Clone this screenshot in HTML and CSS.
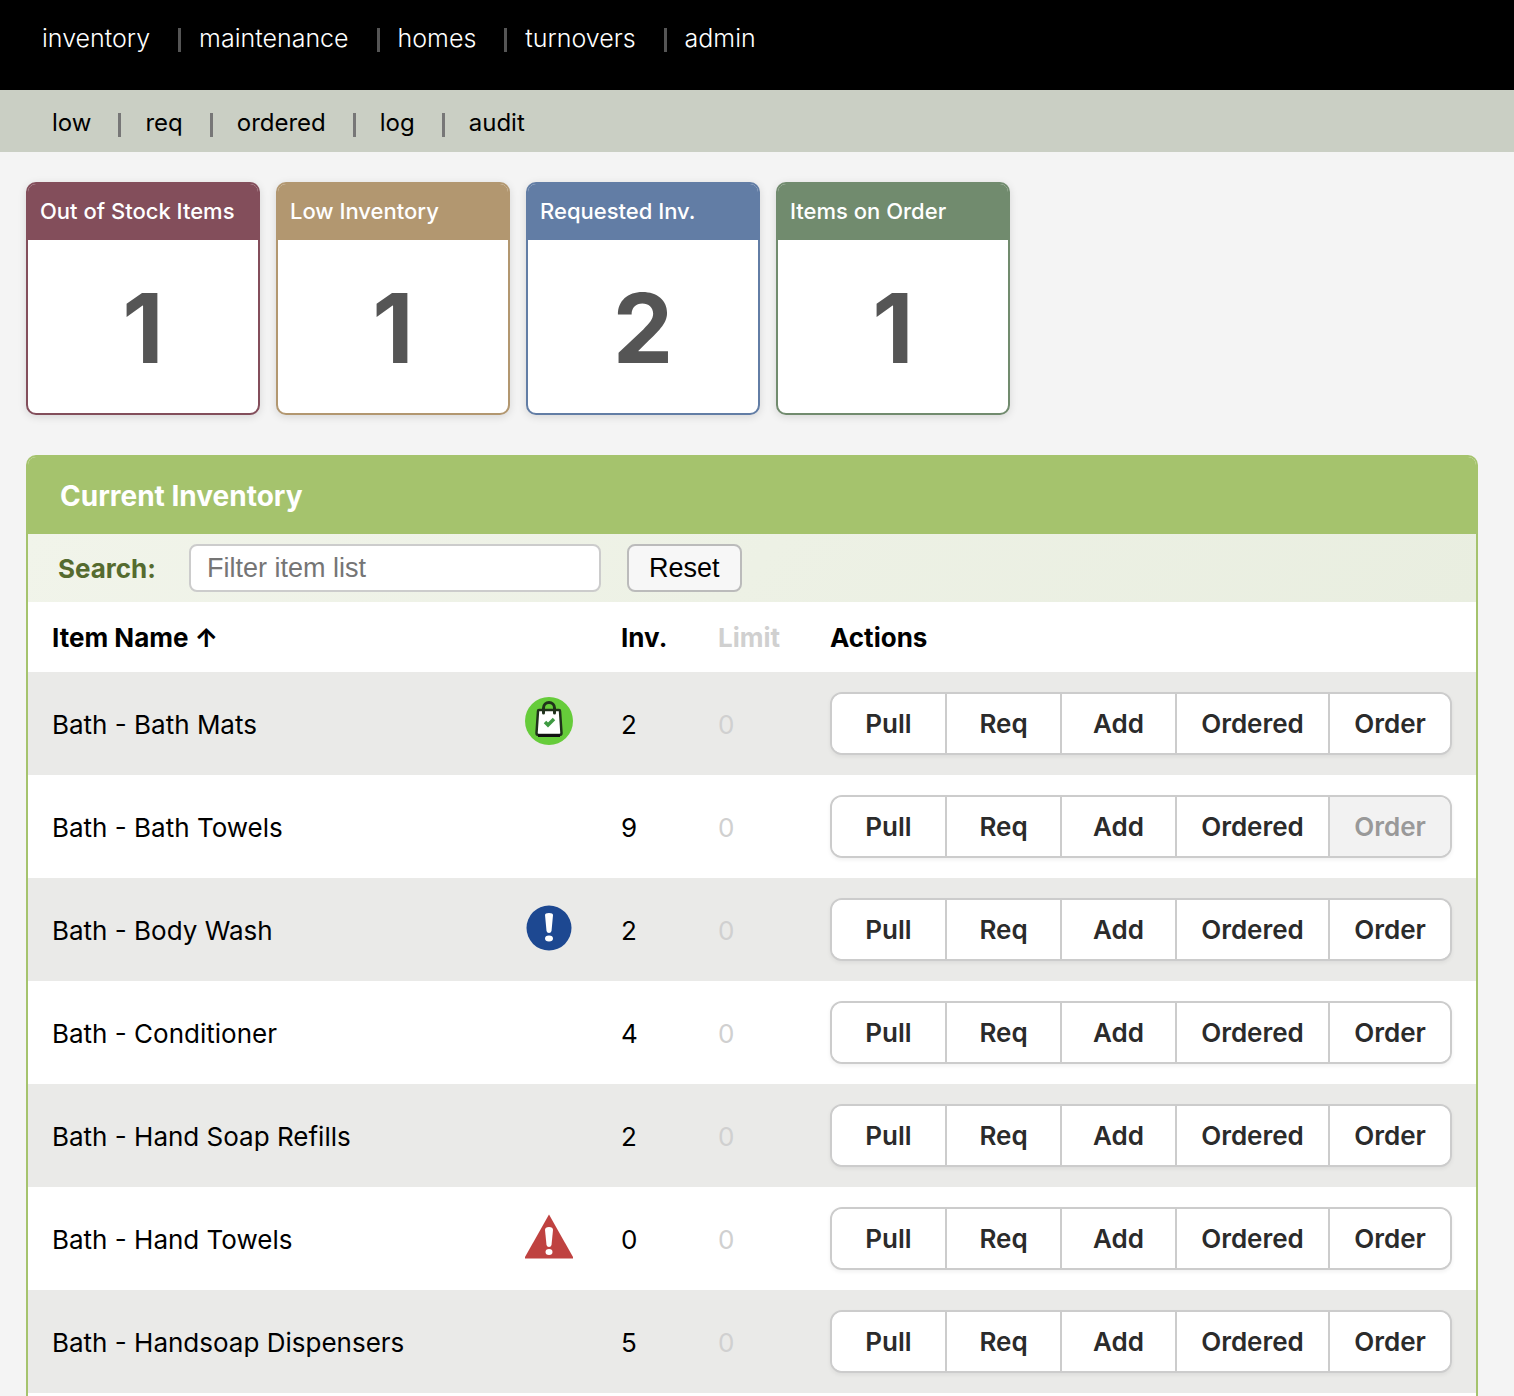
FILE: index.html
```html
<!DOCTYPE html>
<html lang="en">
<head>
    <meta charset="UTF-8">
    <meta name="viewport" content="width=device-width, initial-scale=1.0">
    <title>Inventory</title>
    <link rel="stylesheet" href="styles.css">
</head>
<body>
    <nav class="main-nav" aria-label="Main">
        <a href="#inventory">inventory</a>
        <a href="#maintenance">maintenance</a>
        <a href="#homes">homes</a>
        <a href="#turnovers">turnovers</a>
        <a href="#admin">admin</a>
    </nav>
    <nav class="sub-nav" aria-label="Inventory">
        <a href="#low">low</a>
        <a href="#req">req</a>
        <a href="#ordered">ordered</a>
        <a href="#log">log</a>
        <a href="#audit">audit</a>
    </nav>

    <main>
        <!-- Summary cards -->
        <section class="cards">
            <div class="card out">
                <h2>Out of Stock Items</h2>
                <p>1</p>
            </div>
            <div class="card low">
                <h2>Low Inventory</h2>
                <p>1</p>
            </div>
            <div class="card requested">
                <h2>Requested Inv.</h2>
                <p>2</p>
            </div>
            <div class="card on-order">
                <h2>Items on Order</h2>
                <p>1</p>
            </div>
        </section>

        <!-- Inventory list -->
        <section class="panel">
            <h1>Current Inventory</h1>
            <form class="search">
                <label for="filter">Search:</label>
                <input type="text" id="filter" placeholder="Filter item list">
                <button type="reset">Reset</button>
            </form>
            <table>
                <thead>
                    <tr>
                        <th class="name"><button type="button" class="sort">Item Name ↑</button></th>
                        <th class="status"></th>
                        <th class="inv">Inv.</th>
                        <th class="limit">Limit</th>
                        <th class="actions">Actions</th>
                    </tr>
                </thead>
                <tbody>
                    <tr>
                        <td>Bath - Bath Mats</td>
                        <td class="status">
                            <svg viewBox="0 0 48 48" role="img" aria-label="Ordered">
                                <circle cx="24" cy="24" r="24" fill="#66cc3a"/>
                                <path d="M18.500 15V11a5.500 5.500 0 0 1 11 0v4" fill="none" stroke="#20321b" stroke-width="3"/>
                                <path d="M14 13h20q1 0 1 1l1.500 22q0 2-2 2H13.500q-2 0-2-2l1.500-22q0-1 1-1z" fill="#fff" stroke="#20321b" stroke-width="2.500"/>
                                <path d="M13 38.500h22" stroke="#111" stroke-width="3"/>
                                <path d="M18.500 13v3M29.500 13v3" stroke="#20321b" stroke-width="3" stroke-linecap="round"/>
                                <path d="M20 25l3 3 6-6" fill="none" stroke="#3e9a42" stroke-width="3.500"/>
                            </svg>
                        </td>
                        <td>2</td>
                        <td class="limit">0</td>
                        <td>
                            <div class="btn-group">
                                <button type="button">Pull</button>
                                <button type="button">Req</button>
                                <button type="button">Add</button>
                                <button type="button" class="ordered">Ordered</button>
                                <button type="button" class="order">Order</button>
                            </div>
                        </td>
                    </tr>
                    <tr>
                        <td>Bath - Bath Towels</td>
                        <td class="status"></td>
                        <td>9</td>
                        <td class="limit">0</td>
                        <td>
                            <div class="btn-group">
                                <button type="button">Pull</button>
                                <button type="button">Req</button>
                                <button type="button">Add</button>
                                <button type="button" class="ordered">Ordered</button>
                                <button type="button" class="order" disabled>Order</button>
                            </div>
                        </td>
                    </tr>
                    <tr>
                        <td>Bath - Body Wash</td>
                        <td class="status">
                            <svg viewBox="0 0 48 48" role="img" aria-label="Requested">
                                <circle cx="24" cy="25" r="22.500" fill="#1d4891"/>
                                <path d="M20 12q0-2 4-2t4 2l-1.500 16q-.5 2-2.500 2t-2.500-2z" fill="#fff"/>
                                <ellipse cx="24" cy="35.500" rx="4" ry="3" fill="#fff"/>
                            </svg>
                        </td>
                        <td>2</td>
                        <td class="limit">0</td>
                        <td>
                            <div class="btn-group">
                                <button type="button">Pull</button>
                                <button type="button">Req</button>
                                <button type="button">Add</button>
                                <button type="button" class="ordered">Ordered</button>
                                <button type="button" class="order">Order</button>
                            </div>
                        </td>
                    </tr>
                    <tr>
                        <td>Bath - Conditioner</td>
                        <td class="status"></td>
                        <td>4</td>
                        <td class="limit">0</td>
                        <td>
                            <div class="btn-group">
                                <button type="button">Pull</button>
                                <button type="button">Req</button>
                                <button type="button">Add</button>
                                <button type="button" class="ordered">Ordered</button>
                                <button type="button" class="order">Order</button>
                            </div>
                        </td>
                    </tr>
                    <tr>
                        <td>Bath - Hand Soap Refills</td>
                        <td class="status"></td>
                        <td>2</td>
                        <td class="limit">0</td>
                        <td>
                            <div class="btn-group">
                                <button type="button">Pull</button>
                                <button type="button">Req</button>
                                <button type="button">Add</button>
                                <button type="button" class="ordered">Ordered</button>
                                <button type="button" class="order">Order</button>
                            </div>
                        </td>
                    </tr>
                    <tr>
                        <td>Bath - Hand Towels</td>
                        <td class="status">
                            <svg viewBox="0 0 48 48" role="img" aria-label="Out of stock">
                                <path d="M24 2.500L48 45v1.500H0V45z" fill="#bf4240"/>
                                <path d="M20 18q0-3 4-3t4 3l-1.500 15q-.5 2-2.500 2t-2.500-2z" fill="#fff"/>
                                <ellipse cx="24" cy="40" rx="3.500" ry="3" fill="#fff"/>
                            </svg>
                        </td>
                        <td>0</td>
                        <td class="limit">0</td>
                        <td>
                            <div class="btn-group">
                                <button type="button">Pull</button>
                                <button type="button">Req</button>
                                <button type="button">Add</button>
                                <button type="button" class="ordered">Ordered</button>
                                <button type="button" class="order">Order</button>
                            </div>
                        </td>
                    </tr>
                    <tr>
                        <td>Bath - Handsoap Dispensers</td>
                        <td class="status"></td>
                        <td>5</td>
                        <td class="limit">0</td>
                        <td>
                            <div class="btn-group">
                                <button type="button">Pull</button>
                                <button type="button">Req</button>
                                <button type="button">Add</button>
                                <button type="button" class="ordered">Ordered</button>
                                <button type="button" class="order">Order</button>
                            </div>
                        </td>
                    </tr>
                </tbody>
            </table>
        </section>
    </main>
</body>
</html>
```
FILE: styles.css
```css
* {
    box-sizing: border-box;
    margin: 0;
    padding: 0;
}

body {
    display: flex;
    flex-direction: column;
    min-height: 100vh;
    font-family: Inter, "Liberation Sans", sans-serif;
    font-size: 26px;
    color: #000;
    background-color: #f4f4f4;
}

/* Navigation */
.main-nav,
.sub-nav {
    display: flex;
}

.main-nav a,
.sub-nav a {
    display: flex;
    align-items: center;
    line-height: 32px;
    text-decoration: none;
}

.main-nav a + a::before,
.sub-nav a + a::before {
    content: "";
    width: 3px;
    height: 24px;
    margin-top: 3px;
}

.main-nav {
    padding: 22px 42px 36px;
    font-size: 25px;
    font-weight: 300;
    background-color: #000;
}

.main-nav a {
    color: #fff;
}

.main-nav a + a::before {
    margin-left: 28px;
    margin-right: 18px;
    background-color: #555;
}

.sub-nav {
    padding: 17px 52px 13px;
    font-size: 24px;
    background-color: #cacfc4;
}

.sub-nav a {
    color: #000;
}

.sub-nav a + a::before {
    margin-left: 27px;
    margin-right: 24px;
    background-color: #777;
}

main {
    display: flex;
    flex-direction: column;
    flex: 1;
    padding: 30px 36px 0 26px;
}

/* Summary cards */
.cards {
    display: flex;
    flex-wrap: wrap;
    gap: 16px;
    margin-bottom: 40px;
}

.card {
    width: 234px;
    border: 2px solid;
    border-radius: 10px;
    background-color: #fff;
    box-shadow: 0 2px 8px rgba(0, 0, 0, 0.12);
    overflow: hidden;
}

.card h2 {
    padding: 11px 12px 13px;
    font-size: 22px;
    font-weight: 500;
    line-height: 32px;
    color: #fff;
}

.card p {
    padding: 28px 0 25px;
    font-size: 96px;
    font-weight: 700;
    line-height: 120px;
    text-align: center;
    color: #555;
}

.out { border-color: #834e5b; }
.out h2 { background-color: #834e5b; }
.low { border-color: #b29770; }
.low h2 { background-color: #b29770; }
.requested { border-color: #627da5; }
.requested h2 { background-color: #627da5; }
.on-order { border-color: #718b6e; }
.on-order h2 { background-color: #718b6e; }

/* Inventory panel */
.panel {
    flex: 1;
    border: 2px solid #a5c36d;
    border-bottom: none;
    border-radius: 10px 10px 0 0;
    background-color: #fff;
    overflow: hidden;
}

.panel h1 {
    padding: 21px 32px 20px;
    font-size: 28px;
    line-height: 36px;
    color: #fff;
    background-color: #a5c36d;
}

.search {
    display: flex;
    align-items: center;
    padding: 10px 30px;
    background: linear-gradient(135deg, #f1f4ea, #e9eee0);
}

.search label {
    margin-right: 33px;
    font-weight: 700;
    color: #556b2f;
}

.search input,
.search button {
    height: 48px;
    font-family: "Liberation Sans", Arial, sans-serif;
    font-size: 27px;
    border-radius: 8px;
}

.search input {
    width: 412px;
    padding: 0 16px;
    border: 2px solid #ccc;
    background-color: #fff;
}

.search input::placeholder {
    color: #757575;
}

.search button {
    margin-left: 26px;
    padding: 0 20px;
    border: 2px solid #bbb;
    background-color: #f7f7f7;
}

table {
    width: 100%;
    border-collapse: collapse;
    table-layout: fixed;
}

th,
td {
    padding: 0 24px;
    text-align: left;
    white-space: nowrap;
}

th {
    height: 70px;
    font-weight: 700;
}

td {
    height: 103px;
    padding-top: 2px;
}

td:last-child {
    padding-top: 0;
}

tbody tr:nth-child(odd) {
    background-color: #eaeae8;
}

.status { width: 96px; }
.inv { width: 97px; }
.limit { width: 112px; color: #d0d0d0; }
.actions { width: 670px; }

.sort {
    font: inherit;
    color: inherit;
    border: none;
    background: none;
    cursor: pointer;
}

td.status {
    padding-top: 0;
    padding-bottom: 5px;
}

.status svg {
    display: block;
    width: 48px;
    height: 48px;
}

/* Row buttons */
.btn-group {
    display: flex;
    height: 63px;
    border: 2px solid #ccc;
    border-radius: 12px;
    background-color: #fff;
    box-shadow: 0 2px 4px rgba(0, 0, 0, 0.06);
    overflow: hidden;
}

.btn-group button {
    width: 115px;
    font-family: inherit;
    font-size: 26px;
    font-weight: 600;
    color: #2b2b2b;
    border: none;
    border-right: 2px solid #ccc;
    background-color: #fff;
    cursor: pointer;
}

.btn-group .ordered {
    width: 153px;
}

.btn-group .order {
    flex: 1;
    border-right: none;
}

.btn-group button:disabled {
    color: #999;
    background-color: #f2f2f2;
    cursor: default;
}
```
